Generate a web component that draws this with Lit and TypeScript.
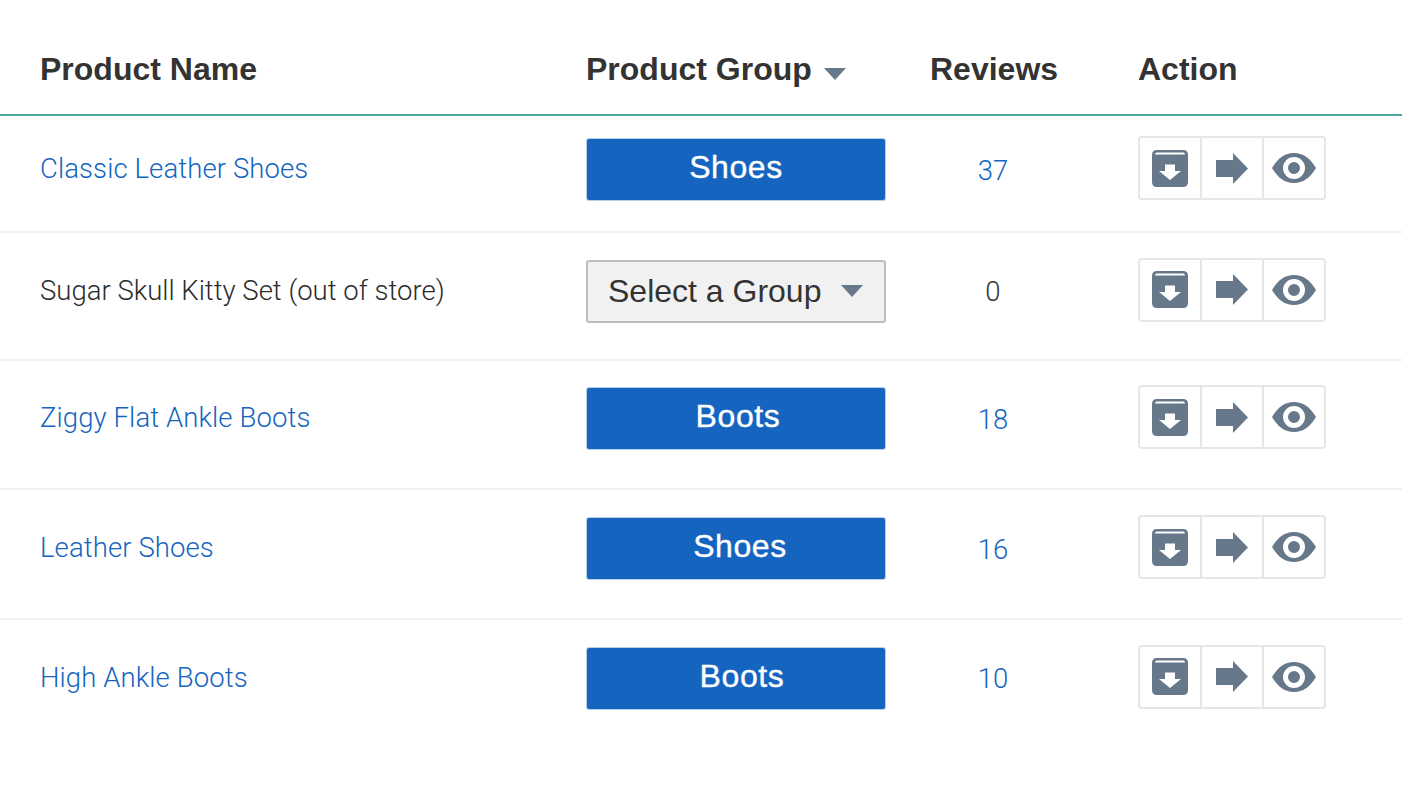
import { LitElement, html, css, svg } from "lit";
import { customElement } from "lit/decorators.js";

type Row = { name: string; group?: string; groupShift: number; reviews: string; height: number; lift: number };

const rows: Row[] = [
  { name: "Classic Leather Shoes", group: "Shoes", groupShift: 0, reviews: "37", height: 117, lift: 8 },
  { name: "Sugar Skull Kitty Set (out of store)", groupShift: 0, reviews: "0", height: 128, lift: 10 },
  { name: "Ziggy Flat Ankle Boots", group: "Boots", groupShift: 4, reviews: "18", height: 129, lift: 12 },
  { name: "Leather Shoes", group: "Shoes", groupShift: 8, reviews: "16", height: 130, lift: 11 },
  { name: "High Ankle Boots", group: "Boots", groupShift: 12, reviews: "10", height: 130, lift: 14 },
];

const caret = html`<svg class="caret" width="22" height="12" viewBox="0 0 22 12"><path d="M0 0H22L11 12Z" fill="#66788a"/></svg>`;

const archive = svg`<path fill="#66788a" fill-rule="evenodd" d="M5 0H31Q36 0 36 5V32Q36 37 31 37H5Q0 37 0 32V5Q0 0 5 0ZM5 2.6Q3 2.6 3 4.6H33Q33 2.6 31 2.6ZM13 14.5V21H7L18 30L29 21H23V14.5Z"/>`;
const arrow = svg`<path fill="#66788a" d="M0 7H17V0L32 15.5L17 31V24H0Z"/>`;
const eye = svg`<path fill="#66788a" fill-rule="evenodd" d="M0 15C6 5 13 0 22 0S38 5 44 15C38 25 31 30 22 30S6 25 0 15ZM22 4A11 11 0 1 0 22 26A11 11 0 1 0 22 4ZM22 9A6 6 0 1 1 22 21A6 6 0 1 1 22 9Z"/>`;

@customElement("app-root")
export class AppRoot extends LitElement {
  static styles = css`
    :host {
      display: block;
      width: 1402px;
      height: 800px;
      background: #fff;
      font-family: "Liberation Sans", Arial, sans-serif;
      color: #333;
      overflow: hidden;
    }
    .row {
      display: grid;
      grid-template-columns: 546px 344px 208px 1fr;
      align-items: center;
      padding-left: 40px;
      box-sizing: border-box;
      border-bottom: 2px solid #f0f0f0;
    }
    .row:last-child { border-bottom: none; }
    .head {
      height: 116px;
      border-bottom: 2px solid #4aa89f;
      font-weight: 700;
      font-size: 32px;
      color: #333;
      padding-top: 25px;
    }
    .sort { display: flex; align-items: center; gap: 12px; }
    .caret { display: block; flex: none; }
    .sort .caret { margin-top: 8px; }
    .name {
      font-family: Roboto, "Liberation Sans", sans-serif;
      font-weight: 300;
      font-size: 27.5px;
      color: #2c2c2c;
      margin-bottom: 2px;
    }
    a.name { letter-spacing: 0.1px; }
    a.name, .count-link { color: #1565c0; text-decoration: none; }
    .group {
      width: 300px;
      height: 63px;
      box-sizing: border-box;
      border-radius: 3px;
      display: flex;
      align-items: center;
      justify-content: center;
      font-size: 32px;
    }
    .pill {
      background: #1565c0;
      border: 1px solid #b9d0ea;
      color: #fff;
      letter-spacing: 0.6px;
      -webkit-text-stroke: 0.35px #fff;
      padding-bottom: 4px;
    }
    .select {
      background: #f1f1f1;
      border: 2px solid #bdbdbd;
      color: #333;
      justify-content: space-between;
      padding: 0 21px 0 20px;
    }
    .reviews {
      width: 126px;
      text-align: center;
      font-family: Roboto, "Liberation Sans", sans-serif;
      font-weight: 300;
      font-size: 27.5px;
      padding-top: 1px;
    }
    .actions {
      display: flex;
      width: 188px;
      height: 64px;
      box-sizing: border-box;
      border: 2px solid #e6e6e6;
      border-radius: 4px;
      margin-bottom: 3px;
    }
    .act {
      flex: 1;
      display: flex;
      align-items: center;
      justify-content: center;
      border-right: 2px solid #e6e6e6;
    }
    .act:last-child { border-right: none; }
    .act svg { display: block; }
  `;

  render() {
    return html`
      <div class="row head">
        <div>Product Name</div>
        <div class="sort">Product Group ${caret}</div>
        <div>Reviews</div>
        <div>Action</div>
      </div>
      ${rows.map(
        (r) => html`
          <div class="row" style="height:${r.height}px;padding-bottom:${r.lift}px">
            ${r.group
              ? html`<a class="name">${r.name}</a>`
              : html`<div class="name">${r.name}</div>`}
            ${r.group
              ? html`<div class="group pill" style="padding-left:${r.groupShift}px">${r.group}</div>`
              : html`<div class="group select">Select a Group ${caret}</div>`}
            <div class="reviews ${r.group ? "count-link" : ""}">${r.reviews}</div>
            <div class="actions">
              <div class="act"><svg width="36" height="37" viewBox="0 0 36 37">${archive}</svg></div>
              <div class="act"><svg width="32" height="31" viewBox="0 0 32 31">${arrow}</svg></div>
              <div class="act"><svg width="44" height="30" viewBox="0 0 44 30">${eye}</svg></div>
            </div>
          </div>
        `
      )}
    `;
  }
}
